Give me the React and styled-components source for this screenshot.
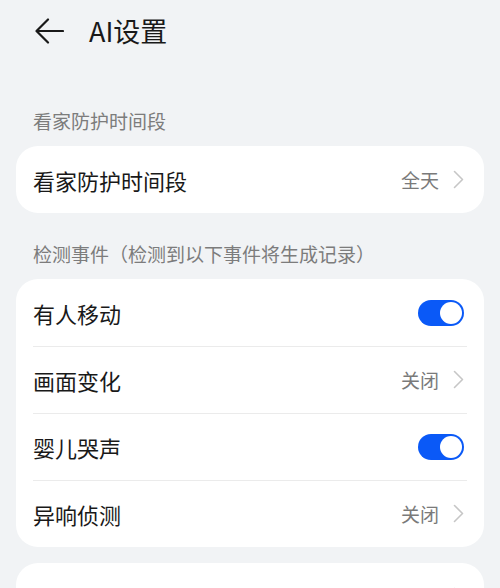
import React, { useState } from 'react'
import styled, { createGlobalStyle } from 'styled-components'

const GlobalStyle = createGlobalStyle`
  html, body {
    margin: 0;
    padding: 0;
    background: #f1f3f5;
    font-family: "Noto Sans CJK SC", "Noto Sans", sans-serif;
    color: #191919;
  }
`

const Page = styled.div`
  width: 500px;
  height: 588px;
  overflow: hidden;
  background: #f1f3f5;
  padding: 0 16px;
  box-sizing: border-box;
`

const Header = styled.header`
  height: 62px;
  margin-bottom: 18px;
  display: flex;
  align-items: center;
  gap: 25px;
  padding-left: 19px;
`

const BackBtn = styled.button`
  border: none;
  background: none;
  padding: 0;
  width: 29px;
  height: 26px;
  display: flex;
  align-items: center;
  cursor: pointer;
`

const Title = styled.h1`
  margin: 0;
  font-size: 27px;
  font-weight: 400;
  line-height: 36px;
  color: #191919;
`

const SectionLabel = styled.div`
  font-size: 19px;
  line-height: 26px;
  color: #7c7c7c;
  padding: 28px 17px 12px;
`

const Card = styled.section`
  background: #ffffff;
  border-radius: 22px;
  margin-top: ${p => p.$gap || 0}px;
`

const Row = styled.div`
  height: 67px;
  display: flex;
  align-items: center;
  justify-content: space-between;
  padding: 0 20px 0 17px;
  position: relative;

  & + &::before {
    content: '';
    position: absolute;
    top: 0;
    left: 17px;
    right: 17px;
    height: 1px;
    background: #ebebeb;
  }
`

const RowTitle = styled.span`
  font-size: 22px;
  line-height: 30px;
  color: #191919;
`

const Trail = styled.div`
  display: flex;
  align-items: center;
  gap: 14px;
`

const Value = styled.span`
  font-size: 19px;
  line-height: 26px;
  color: #7a7a7a;
`

const Toggle = styled.button`
  width: 46px;
  height: 26px;
  border-radius: 13px;
  border: none;
  padding: 2px;
  background: ${p => (p.$on ? '#0a59f7' : '#d9d9d9')};
  display: flex;
  justify-content: ${p => (p.$on ? 'flex-end' : 'flex-start')};
  box-sizing: border-box;
  cursor: pointer;
`

const Knob = styled.span`
  width: 22px;
  height: 22px;
  border-radius: 50%;
  background: #ffffff;
`

const Chevron = () => (
  <svg width="11" height="19" viewBox="0 0 11 19" fill="none">
    <path d="M1.5 1.5 L9.5 9.5 L1.5 17.5" stroke="#c6c6c6" strokeWidth="1.6" strokeLinecap="round" strokeLinejoin="round" />
  </svg>
)

const BackArrow = () => (
  <svg width="29" height="26" viewBox="0 0 29 26" fill="none">
    <path d="M28 13 H2 M13 1.5 L1.5 13 L13 24.5" stroke="#191919" strokeWidth="2.2" strokeLinecap="round" strokeLinejoin="round" />
  </svg>
)

const LinkRow = ({ title, value }) => (
  <Row>
    <RowTitle>{title}</RowTitle>
    <Trail>
      {value && <Value>{value}</Value>}
      <Chevron />
    </Trail>
  </Row>
)

const SwitchRow = ({ title, initial }) => {
  const [on, setOn] = useState(initial)
  return (
    <Row>
      <RowTitle>{title}</RowTitle>
      <Toggle $on={on} onClick={() => setOn(!on)} aria-label={title}>
        <Knob />
      </Toggle>
    </Row>
  )
}

const App = () => {
  return (
    <>
      <GlobalStyle />
      <Page>
        <Header>
          <BackBtn aria-label="返回">
            <BackArrow />
          </BackBtn>
          <Title>AI设置</Title>
        </Header>

        <SectionLabel>看家防护时间段</SectionLabel>
        <Card>
          <LinkRow title="看家防护时间段" value="全天" />
        </Card>

        <SectionLabel>检测事件（检测到以下事件将生成记录）</SectionLabel>
        <Card>
          <SwitchRow title="有人移动" initial={true} />
          <LinkRow title="画面变化" value="关闭" />
          <SwitchRow title="婴儿哭声" initial={true} />
          <LinkRow title="异响侦测" value="关闭" />
        </Card>

        <Card $gap={16}>
          <LinkRow title="消息推送" />
        </Card>
      </Page>
    </>
  )
}

export default App
